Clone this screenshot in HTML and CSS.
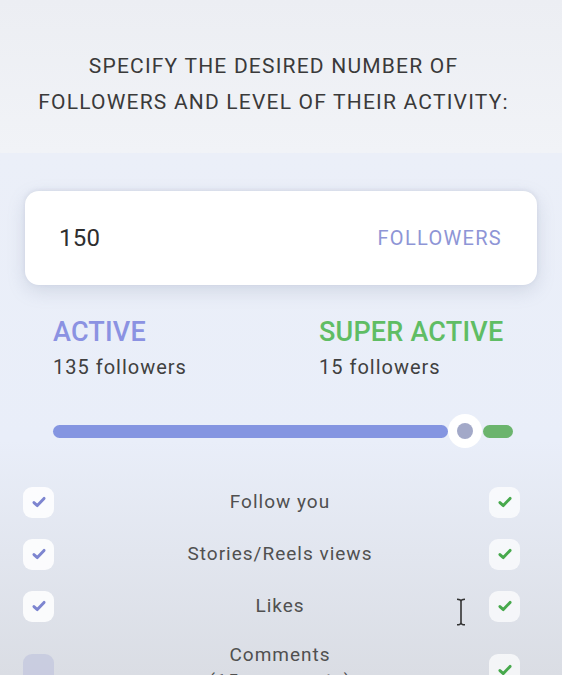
FILE: index.html
```html
<!DOCTYPE html>
<html>
<head>
<meta charset="utf-8">
<link rel="stylesheet" href="styles.css">
</head>
<body>
<div class="page">
  <header class="head">
    <h1 class="title">SPECIFY THE DESIRED NUMBER OF<br>FOLLOWERS AND LEVEL OF THEIR ACTIVITY:</h1>
  </header>
  <main class="main">
    <div class="card">
      <span class="count">150</span>
      <span class="unit">FOLLOWERS</span>
    </div>
    <div class="levels">
      <div class="level">
        <div class="lname active">ACTIVE</div>
        <div class="lcount">135 followers</div>
      </div>
      <div class="level">
        <div class="lname super">SUPER ACTIVE</div>
        <div class="lcount">15 followers</div>
      </div>
    </div>
    <div class="slider">
      <div class="track-a"></div>
      <div class="knob"><div class="knob-dot"></div></div>
      <div class="track-b"></div>
    </div>
    <div class="rows">
      <div class="row">
        <span class="box"><svg viewBox="0 0 16 16" class="chk chk-a"><path d="M3.5 8.5 L6.5 11.2 L12.5 4.8"/></svg></span>
        <span class="rlabel">Follow you</span>
        <span class="box box-r"><svg viewBox="0 0 16 16" class="chk chk-b"><path d="M3.5 8.5 L6.5 11.2 L12.5 4.8"/></svg></span>
      </div>
      <div class="row">
        <span class="box"><svg viewBox="0 0 16 16" class="chk chk-a"><path d="M3.5 8.5 L6.5 11.2 L12.5 4.8"/></svg></span>
        <span class="rlabel">Stories/Reels views</span>
        <span class="box box-r"><svg viewBox="0 0 16 16" class="chk chk-b"><path d="M3.5 8.5 L6.5 11.2 L12.5 4.8"/></svg></span>
      </div>
      <div class="row">
        <span class="box"><svg viewBox="0 0 16 16" class="chk chk-a"><path d="M3.5 8.5 L6.5 11.2 L12.5 4.8"/></svg></span>
        <span class="rlabel">Likes</span>
        <span class="box box-r"><svg viewBox="0 0 16 16" class="chk chk-b"><path d="M3.5 8.5 L6.5 11.2 L12.5 4.8"/></svg></span>
        <svg class="ibeam" viewBox="0 0 12 28"><path d="M2 1.2 Q6 1.2 6 3.5 Q6 1.2 10 1.2 M6 3.5 V24.5 M2 26.8 Q6 26.8 6 24.5 Q6 26.8 10 26.8"/></svg>
      </div>
      <div class="row row-last">
        <span class="box box-off"></span>
        <span class="rlabel">Comments<br>(15 comments)</span>
        <span class="box box-r"><svg viewBox="0 0 16 16" class="chk chk-b"><path d="M3.5 8.5 L6.5 11.2 L12.5 4.8"/></svg></span>
      </div>
    </div>
  </main>
</div>
</body>
</html>
```

FILE: styles.css
```css
* { box-sizing: border-box; }
html, body { margin: 0; padding: 0; }
body {
  width: 562px;
  height: 675px;
  overflow: hidden;
  font-family: Roboto, "Liberation Sans", sans-serif;
  background: #eef0f6;
}
.page { width: 562px; height: 675px; overflow: hidden; }
.head {
  height: 153px;
  background: linear-gradient(#eceef3, #f1f3f7);
  padding: 48px 15px 0 0;
}
.title {
  margin: 0;
  font-weight: 400;
  font-size: 21px;
  line-height: 36px;
  color: #3a3a3a;
  text-align: center;
  letter-spacing: 1.2px;
}
.main {
  height: 522px;
  background: linear-gradient(#ebeff8 0%, #e9eef9 55%, #dadde4 100%);
  padding: 38px 25px 0;
}
.card {
  height: 94px;
  background: #fff;
  border-radius: 14px;
  box-shadow: 0 6px 18px rgba(120, 130, 160, 0.22), 0 -1px 4px rgba(120,130,160,0.15);
  display: flex;
  align-items: center;
  justify-content: space-between;
  padding: 0 35px 0 34px;
}
.count { font-size: 24px; color: #2e2e2e; letter-spacing: 0.3px; }
.unit { font-size: 20px; color: #8e95d6; letter-spacing: 1.3px; }
.levels {
  display: flex;
  padding: 31px 0 0 28px;
}
.level { width: 266px; flex: none; }
.level:last-child { width: auto; }
.lname {
  font-size: 27px;
  font-weight: 500;
  line-height: 32px;
  letter-spacing: 0.2px;
  white-space: nowrap;
}
.active { color: #8b92e2; }
.super { color: #5fbd64; }
.lcount {
  margin-top: 8px;
  font-size: 20px;
  line-height: 22px;
  color: #404040;
  letter-spacing: 1px;
}
.slider {
  display: flex;
  align-items: center;
  margin: 36px 0 0 28px;
  height: 34px;
}
.track-a {
  width: 395px;
  height: 13px;
  border-radius: 7px;
  background: #8495e1;
}
.knob {
  width: 34px;
  height: 34px;
  border-radius: 50%;
  background: #fff;
  display: flex;
  align-items: center;
  justify-content: center;
  flex: none;
}
.knob-dot {
  width: 16px;
  height: 16px;
  border-radius: 50%;
  background: #a3a9c8;
}
.track-b {
  width: 30px;
  height: 13px;
  border-radius: 7px;
  background: #6bb46d;
  margin-left: 1px;
}
.rows {
  margin: 38px 0 0 -2px;
  width: 497px;
  display: flex;
  flex-direction: column;
  gap: 20px;
}
.row {
  display: flex;
  align-items: center;
  height: 32px;
  position: relative;
}
.box {
  width: 31px;
  height: 31px;
  border-radius: 9px;
  background: rgba(255, 255, 255, 0.85);
  display: flex;
  align-items: center;
  justify-content: center;
  flex: none;
}
.box-r { background: rgba(255, 255, 255, 0.7); }
.box-off { background: rgba(196, 200, 222, 0.8); }
.chk { width: 18px; height: 18px; fill: none; stroke-width: 2.6; stroke-linecap: round; stroke-linejoin: round; }
.chk-a { stroke: #7d85d0; }
.chk-b { stroke: #47a94c; }
.rlabel {
  flex: 1;
  padding-left: 17px;
  font-size: 19px;
  color: #505050;
  text-align: center;
  letter-spacing: 1px;
  line-height: 26px;
}
.row-last { align-items: flex-start; }
.row-last .box { margin-top: 12px; }
.ibeam {
  position: absolute;
  left: 432px;
  top: 8px;
  width: 12px;
  height: 28px;
  fill: none;
  stroke: #333;
  stroke-width: 1.6;
}
```
